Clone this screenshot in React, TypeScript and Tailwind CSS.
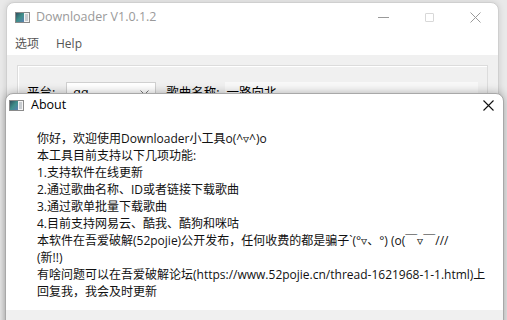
import React from "react";

const font = { fontFamily: '"Open Sans", "Noto Sans CJK SC", sans-serif' };

function AppIcon() {
    return (
        <svg width="15" height="11" viewBox="0 0 15 11">
            <defs>
                <linearGradient id="g" x1="0" y1="0" x2="1" y2="1">
                    <stop offset="0" stopColor="#2f4f5f"/>
                    <stop offset="0.5" stopColor="#3f8f8a"/>
                    <stop offset="1" stopColor="#5a7fb0"/>
                </linearGradient>
            </defs>
            <rect x="0.5" y="0.5" width="14" height="10" fill="#f4f4f4" stroke="#8a8a8a"/>
            <rect x="1" y="1" width="8" height="9" fill="url(#g)"/>
            <rect x="10" y="2" width="3" height="7" fill="#c8ccd0"/>
        </svg>
    );
}

function MainWindow() {
    return (
        <div className="absolute left-[6px] top-[2px] w-[493px] h-[330px] rounded-t-[8px] border border-[#cfcfcf] bg-white overflow-hidden flex flex-col shadow-[0_0_6px_rgba(0,0,0,0.12)]">
            {/* title bar */}
            <div className="h-[29px] flex items-center shrink-0">
                <div className="ml-[8px]">
                    <AppIcon/>
                </div>
                <span className="ml-[6px] text-[12.5px] text-[#9a9a9a]" style={font}>Downloader V1.0.1.2</span>
                <div className="ml-auto flex h-full">
                    <div className="w-[46px] flex items-center justify-center">
                        <div className="w-[11px] h-px bg-[#9a9a9a]"/>
                    </div>
                    <div className="w-[46px] flex items-center justify-center">
                        <div className="w-[9px] h-[9px] border border-[#d8d8d8] rounded-[1px]"/>
                    </div>
                    <div className="w-[46px] flex items-center justify-center">
                        <svg width="11" height="11" viewBox="0 0 11 11">
                            <path d="M0.5 0.5l10 10M10.5 0.5l-10 10" stroke="#9a9a9a" strokeWidth="1"/>
                        </svg>
                    </div>
                </div>
            </div>
            {/* menu */}
            <div className="h-[23px] flex items-center gap-[17px] pl-[8px] text-[12px] text-[#555] shrink-0" style={font}>
                <span>选项</span>
                <span>Help</span>
            </div>
            {/* client */}
            <div className="flex-1 bg-[#f0f0f0] pt-[10px] px-[10px]">
                <div className="h-[200px] border border-[#dcdcdc] shadow-[inset_1px_1px_0_#fff] px-[9px] pt-[16px]">
                    <div className="flex items-center text-[12.5px] text-black" style={font}>
                        <span>平台:</span>
                        <div className="ml-[11px] w-[90px] h-[22px] bg-white border border-[#d0d0d0] flex items-center px-[6px]">
                            <span>qq</span>
                            <svg className="ml-auto" width="9" height="6" viewBox="0 0 9 6">
                                <path d="M0.5 0.5l4 4 4-4" fill="none" stroke="#777"/>
                            </svg>
                        </div>
                        <span className="ml-[10px]">歌曲名称:</span>
                        <div className="ml-[5px] flex-1 h-[22px] bg-[#f8f8f8] flex items-center px-[2px]">
                            一路向北
                        </div>
                    </div>
                </div>
            </div>
        </div>
    );
}

function AboutDialog() {
    const lines = [
        "你好，欢迎使用Downloader小工具o(^▿^)o",
        "本工具目前支持以下几项功能:",
        "1.支持软件在线更新",
        "2.通过歌曲名称、ID或者链接下载歌曲",
        "3.通过歌单批量下载歌曲",
        "4.目前支持网易云、酷我、酷狗和咪咕",
        "本软件在吾爱破解(52pojie)公开发布，任何收费的都是骗子`(°▿、°) (o(￣▿￣///",
        "(新!!)",
        "有啥问题可以在吾爱破解论坛(https://www.52pojie.cn/thread-1621968-1-1.html)上",
        "回复我，我会及时更新",
    ];
    return (
        <div className="absolute left-[5px] top-[93px] w-[499px] h-[240px] rounded-t-[8px] border border-[#a8a8a8] bg-white overflow-hidden flex flex-col shadow-[0_0_10px_rgba(0,0,0,0.3)]">
            <div className="h-[22px] flex items-center shrink-0">
                <div className="ml-[3px]">
                    <AppIcon/>
                </div>
                <span className="ml-[7px] text-[12.5px] text-black" style={font}>About</span>
                <svg className="ml-auto mr-[9px]" width="11" height="11" viewBox="0 0 11 11">
                    <path d="M0.5 0.5l10 10M10.5 0.5l-10 10" stroke="#111" strokeWidth="1.1"/>
                </svg>
            </div>
            <div className="h-[194px] shrink-0 pl-[31px] pt-[14px] text-[12px] leading-[17px] text-[#111] whitespace-nowrap" style={font}>
                {lines.map((l, i) => (
                    <div key={i}>{l}</div>
                ))}
            </div>
            <div className="flex-1 bg-[#f0f0f0]"/>
        </div>
    );
}

export default function App() {
    return (
        <div className="relative w-[507px] h-[320px] overflow-hidden bg-[#e9e9e9]">
            <MainWindow/>
            <AboutDialog/>
        </div>
    );
}
